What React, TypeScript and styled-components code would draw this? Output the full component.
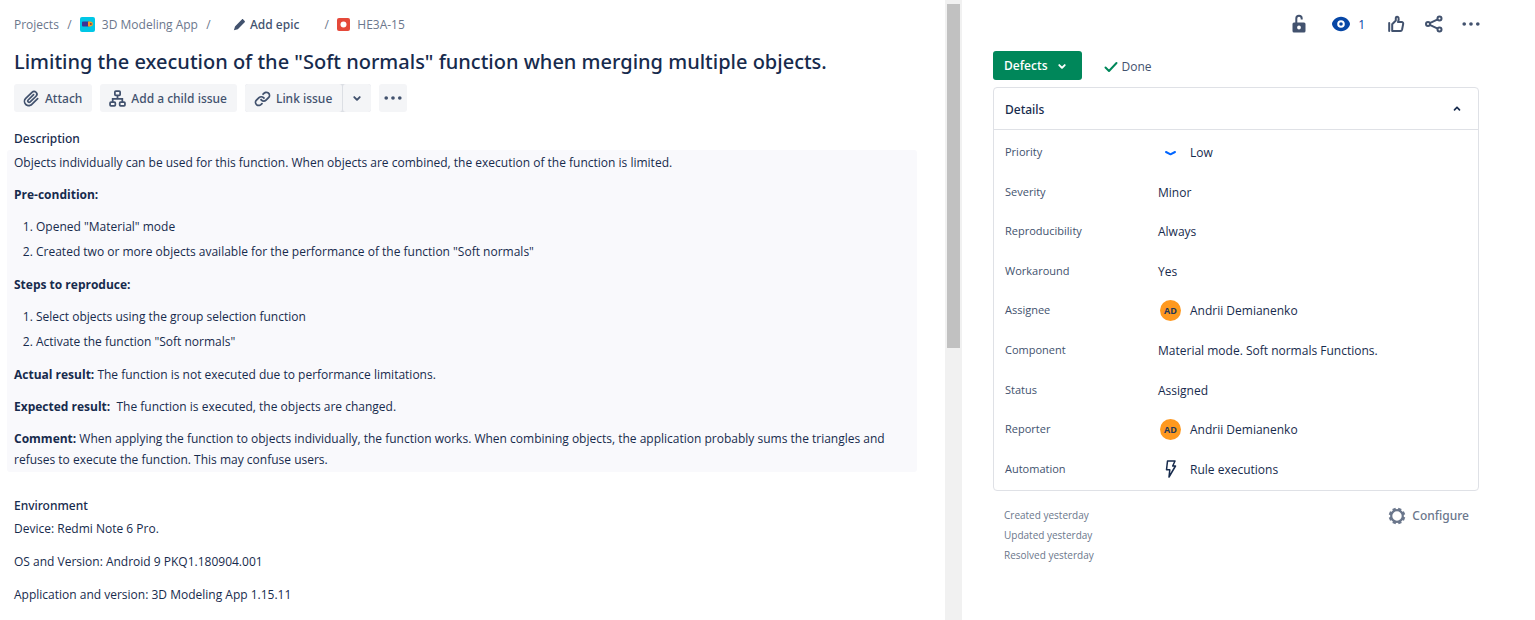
import React from 'react';
import styled, { createGlobalStyle, css } from 'styled-components';

const GlobalStyle = createGlobalStyle`
  *, *::before, *::after { box-sizing: border-box; }
  body {
    margin: 0;
    background: #fff;
    color: #172b4d;
    font: 400 12px/21px 'Open Sans', 'Noto Sans', sans-serif;
  }
  button { font: inherit; color: inherit; border: 0; background: none; padding: 0; cursor: pointer; }
  a { color: inherit; text-decoration: none; }
  h1, h2, p, ol, ul, dl, dd { margin: 0; padding: 0; }
  svg { display: block; flex: none; }
`;

const medium = css`
  font-family: 'Noto Sans', 'Open Sans', sans-serif;
  font-weight: 500;
`;

const Page = styled.div`
  display: grid;
  grid-template-columns: minmax(0, 945fr) 17px minmax(0, 573fr);
  min-height: 100vh;
`;

const Main = styled.main`
  padding: 14px 28px 16px 14px;
`;

const Breadcrumbs = styled.nav`
  display: flex;
  align-items: center;
  height: 21px;
  color: #6b778c;
`;

const Crumb = styled.a`
  display: flex;
  align-items: center;
  gap: 7px;
`;

const Slash = styled.span`
  width: 21px;
  text-align: center;
`;

const EpicButton = styled.button`
  display: flex;
  align-items: center;
  gap: 4px;
  margin: 0 17px 0 13px;
  color: #42526e;
  ${medium}
`;

const Title = styled.h1`
  margin-top: 13px;
  ${medium}
  font-size: 20px;
  line-height: 28px;
`;

const Toolbar = styled.div`
  display: flex;
  gap: 8px;
  margin-top: 8px;
`;

const ToolButton = styled.button<{ $square?: boolean }>`
  display: flex;
  align-items: center;
  justify-content: center;
  gap: 3px;
  height: 28px;
  padding: ${p => (p.$square ? '0' : '0 10px 0 7px')};
  width: ${p => (p.$square ? '28px' : 'auto')};
  border-radius: 3px;
  background: #f4f5f7;
  color: #42526e;
  ${medium}
`;

const SplitButton = styled.div`
  display: flex;
  gap: 1px;
  border-radius: 3px;
  background: #dcdfe4;
`;

const SectionTitle = styled.h2`
  ${medium}
  font-size: 12px;
  line-height: 21px;
`;

const Description = styled.section`
  margin-top: 16px;
`;

const RichText = styled.div`
  margin: 1px 0 0 -7px;
  padding: 2px 7px;
  border-radius: 3px;
  background: #f9f9fc;

  p + p, ol + p { margin-top: 11px; }
  ol { margin: 11px 0 12px; padding-left: 22px; }
  li + li { margin-top: 4px; }
  strong { font-weight: 700; }
`;

const Environment = styled.section`
  margin-top: 23px;

  p { margin-top: 2px; }
  p + p { margin-top: 12px; }
`;

const ScrollTrack = styled.div`
  padding: 4px 2px;
  background: #f1f1f1;
`;

const ScrollThumb = styled.div`
  height: 344px;
  background: #c1c1c1;
`;

const Side = styled.aside`
  padding: 12px 56px 16px 31px;
`;

const Actions = styled.div`
  display: flex;
  justify-content: flex-end;
  align-items: center;
  gap: 14px;
  height: 24px;
  margin-right: -3px;
  color: #42526e;
`;

const IconButton = styled.button<{ $active?: boolean }>`
  display: flex;
  align-items: center;
  gap: 5px;
  ${p => p.$active && css`
    color: #0747a6;
    padding: 0 5px 0 4px;
  `}
`;

const StatusRow = styled.div`
  display: flex;
  align-items: center;
  gap: 20px;
  margin-top: 15px;
`;

const StatusButton = styled.button`
  display: flex;
  align-items: center;
  gap: 3px;
  height: 29px;
  padding: 0 9px 0 11px;
  border-radius: 3px;
  background: #00875a;
  color: #fff;
  font-weight: 600;
`;

const Resolution = styled.span`
  display: flex;
  align-items: center;
  gap: 3px;
  padding: 2px 0 0 1px;
  color: #42526e;
`;

const Panel = styled.section`
  margin-top: 7px;
  border: 1px solid #dfe1e6;
  border-radius: 4px;
`;

const PanelHeader = styled.button`
  display: flex;
  align-items: center;
  justify-content: space-between;
  width: 100%;
  height: 42px;
  padding: 1px 11px 0;
  border-bottom: 1px solid #dfe1e6;
  ${medium}
`;

const Fields = styled.dl`
  display: grid;
  grid-auto-rows: 1fr;
  min-height: 360px;
  padding: 3px 11px 1px;
`;

const Field = styled.div`
  display: grid;
  grid-template-columns: 153px minmax(0, 1fr);
  align-items: center;
`;

const FieldLabel = styled.dt`
  padding-bottom: 2px;
  color: #42526e;
  font-size: 11px;
`;

const FieldValue = styled.dd`
  display: flex;
  align-items: center;
  gap: 8px;
`;

const Avatar = styled.span`
  display: flex;
  align-items: center;
  justify-content: center;
  width: 21px;
  height: 21px;
  margin: 0 1px 0 2px;
  border-radius: 50%;
  background: #ff991f;
  color: #253858;
  font-size: 9px;
  font-weight: 700;
`;

const Footer = styled.footer`
  display: flex;
  justify-content: space-between;
  align-items: flex-start;
  padding: 14px 10px 0 11px;
  color: #6b778c;
`;

const Dates = styled.ul`
  list-style: none;
  font-size: 10px;
  line-height: 20px;
`;

const ConfigureButton = styled.button`
  display: flex;
  align-items: center;
  gap: 5px;
  ${medium}
`;

const Svg = ({ size = 24, children }: { size?: number; children: React.ReactNode }) => (
  <svg width={size} height={size} viewBox="0 0 24 24" fill="currentColor" aria-hidden="true">{children}</svg>
);

const ChevronDown = () => (
  <Svg size={22}>
    <path d="M8.292 10.293a1.009 1.009 0 000 1.419l2.939 2.965c.218.215.5.322.779.322s.556-.107.769-.322l2.93-2.955a1.01 1.01 0 000-1.419.987.987 0 00-1.406 0l-2.298 2.317-2.307-2.327a.99.99 0 00-1.406 0z" />
  </Svg>
);

const ChevronUp = () => (
  <Svg size={20}>
    <path d="M8.292 13.707a1.009 1.009 0 010-1.419l2.939-2.965c.218-.215.5-.322.779-.322s.556.107.769.322l2.93 2.955a1.01 1.01 0 010 1.419.987.987 0 01-1.406 0l-2.298-2.317-2.307 2.327a.99.99 0 01-1.406 0z" />
  </Svg>
);

const MoreIcon = () => (
  <Svg size={22}>
    <circle cx="4.6" cy="12" r="2" />
    <circle cx="12" cy="12" r="2" />
    <circle cx="19.4" cy="12" r="2" />
  </Svg>
);

const AttachIcon = () => (
  <Svg size={21}>
    <path d="M11.643 17.965c-1.53 1.495-4.016 1.496-5.542.004a3.773 3.773 0 01.002-5.412l7.147-6.985a2.316 2.316 0 013.233-.003c.893.873.895 2.282.004 3.153l-6.703 6.55a.653.653 0 01-.914-.008.62.62 0 010-.902l6.229-6.087a.941.941 0 000-1.353.995.995 0 00-1.384 0l-6.23 6.087a2.502 2.502 0 00.001 3.607 2.643 2.643 0 003.683.009l6.703-6.55a4.074 4.074 0 00-.003-5.859 4.306 4.306 0 00-6.002.003l-7.148 6.985a5.655 5.655 0 00-.001 8.118c2.29 2.239 6.015 2.238 8.308-.005l6.712-6.56a.943.943 0 000-1.353.995.995 0 00-1.384 0l-6.711 6.561z" />
  </Svg>
);

const ChildIcon = () => (
  <Svg size={21}>
    <g fill="none" stroke="currentColor" strokeWidth="2">
      <rect x="9" y="3.5" width="6" height="5" rx="1" />
      <rect x="3.5" y="16" width="6" height="4.5" rx="1" />
      <rect x="14.5" y="16" width="6" height="4.5" rx="1" />
      <path d="M12 8.5v4M6.5 16v-3.5h11V16" />
    </g>
  </Svg>
);

const LinkIcon = () => (
  <Svg size={21}>
    <path d="M12.856 5.457l-.937.92a1.002 1.002 0 000 1.437 1.047 1.047 0 001.463 0l.984-.966c.967-.95 2.542-1.135 3.602-.288a2.54 2.54 0 01.203 3.81l-2.903 2.852a2.646 2.646 0 01-3.696 0l-1.11-1.09L9 13.57l1.108 1.089c1.822 1.788 4.802 1.788 6.622 0l2.905-2.852a4.558 4.558 0 00-.357-6.82c-1.893-1.517-4.695-1.226-6.422.47" />
    <path d="M11.144 19.543l.937-.92a1.002 1.002 0 000-1.437 1.047 1.047 0 00-1.462 0l-.985.966c-.967.95-2.542 1.135-3.602.288a2.54 2.54 0 01-.203-3.81l2.903-2.852a2.646 2.646 0 013.696 0l1.11 1.09L15 11.43l-1.108-1.089c-1.822-1.788-4.802-1.788-6.622 0l-2.905 2.852a4.558 4.558 0 00.357 6.82c1.893 1.517 4.695 1.226 6.422-.47" />
  </Svg>
);

const PencilIcon = () => (
  <svg width="14" height="14" viewBox="0 0 14 14" fill="currentColor" aria-hidden="true">
    <path d="M9.3 1.9l.6-.5c.4-.4.9-.4 1.3 0l1.5 1.5c.4.4.4.9 0 1.3l-.5.600-6.400 6.400-3.900 1 1.100-3.800z" />
  </svg>
);

const ProjectIcon = () => (
  <svg width="15" height="15" viewBox="0 0 15 15" aria-hidden="true">
    <rect width="15" height="15" rx="2" fill="#00c7e6" />
    <path d="M3 4.5h6v5H3a1 1 0 01-1-1v-3a1 1 0 011-1z" fill="#403294" />
    <path d="M8 4.5h2.500a2.500 2.500 0 010 5H8z" fill="#ff991f" />
    <circle cx="10.8" cy="7" r="1" fill="#6b4a5a" />
  </svg>
);

const BugIcon = () => (
  <svg width="13" height="13" viewBox="0 0 13 13" aria-hidden="true">
    <rect width="13" height="13" rx="2" fill="#e5493a" />
    <circle cx="6.5" cy="6.5" r="3" fill="#fff" />
  </svg>
);

const UnlockIcon = () => (
  <Svg>
    <path fillRule="evenodd" d="M7 10.500h10a1.500 1.500 0 011.500 1.500v7a1.500 1.500 0 01-1.500 1.500H7A1.500 1.500 0 015.500 19v-7A1.500 1.500 0 017 10.500zM12 13.600a1.900 1.900 0 100 3.800 1.900 1.900 0 000-3.800z" />
    <path d="M9.3 11V6.400a2.700 2.700 0 015.400 0v1" fill="none" stroke="currentColor" strokeWidth="2" />
  </Svg>
);

const WatchIcon = () => (
  <Svg>
    <path fillRule="evenodd" d="M12 4.8c5 0 9 4.400 9 7.200s-4 7.200-9 7.200S3 14.800 3 12s4-7.200 9-7.200zm0 3.400a3.800 3.800 0 100 7.600 3.800 3.800 0 000-7.600z" />
    <circle cx="12" cy="12" r="1.8" />
  </Svg>
);

const LikeIcon = () => (
  <Svg>
    <path d="M5.2 11V19" fill="none" stroke="currentColor" strokeWidth="2" strokeLinecap="round" />
    <path d="M8.2 12.200l3.600-3.700V6a1.400 1.400 0 012.700-.3c.4 1.200.1 2.800-.5 4.300h3.700c1 0 1.700.9 1.500 1.900l-1.100 5.600c-.2.900-.8 1.500-1.700 1.500H8.200z" fill="none" stroke="currentColor" strokeWidth="2" strokeLinejoin="round" />
  </Svg>
);

const ShareIcon = () => (
  <Svg>
    <g fill="none" stroke="currentColor" strokeWidth="2">
      <circle cx="6" cy="12" r="2" />
      <circle cx="17.5" cy="6.5" r="2" />
      <circle cx="17.5" cy="17.5" r="2" />
      <path d="M7.8 11.100l7.900-3.700M7.800 12.900l7.900 3.700" />
    </g>
  </Svg>
);

const CheckIcon = () => (
  <svg width="16" height="16" viewBox="0 0 16 16" fill="none" stroke="#00875a" strokeWidth="2" strokeLinecap="round" strokeLinejoin="round" aria-hidden="true">
    <path d="M2.5 8.500l3.500 3.500 7.500-8" />
  </svg>
);

const LowIcon = () => (
  <svg width="24" height="16" viewBox="0 0 24 16" fill="none" stroke="#0065ff" strokeWidth="2" strokeLinecap="round" strokeLinejoin="round" aria-hidden="true">
    <path d="M8 7l4.500 2.300L17 7" />
  </svg>
);

const BoltIcon = () => (
  <svg width="24" height="20" viewBox="0 0 24 20" fill="none" stroke="currentColor" strokeWidth="1.5" strokeLinejoin="round" aria-hidden="true">
    <path d="M9.5 2h7.500l-2.300 5H17.500l-6.500 11 .800-7.200H8.500z" />
  </svg>
);

const GearIcon = () => (
  <svg width="20" height="20" viewBox="0 0 20 20" fill="none" stroke="currentColor" aria-hidden="true">
    <circle cx="10" cy="10" r="5.8" strokeWidth="2.2" />
    <g strokeWidth="3.4">
      {[0, 45, 90, 135, 180, 225, 270, 315].map(a => (
        <path key={a} d="M10 1.8v2.600" transform={`rotate(${a + 22} 10 10)`} />
      ))}
    </g>
  </svg>
);

const person = <><Avatar aria-hidden="true">AD</Avatar>Andrii Demianenko</>;

const fields: [string, React.ReactNode][] = [
  ['Priority', <><LowIcon />Low</>],
  ['Severity', 'Minor'],
  ['Reproducibility', 'Always'],
  ['Workaround', 'Yes'],
  ['Assignee', person],
  ['Component', 'Material mode. Soft normals Functions.'],
  ['Status', 'Assigned'],
  ['Reporter', person],
  ['Automation', <><BoltIcon /><a href="#rules">Rule executions</a></>],
];

export default function App() {
  return (
    <>
      <GlobalStyle />
      <Page>
        <Main>
          <Breadcrumbs aria-label="Breadcrumbs">
            <Crumb href="#projects">Projects</Crumb>
            <Slash>/</Slash>
            <Crumb href="#project"><ProjectIcon />3D Modeling App</Crumb>
            <Slash>/</Slash>
            <EpicButton type="button"><PencilIcon />Add epic</EpicButton>
            <Slash>/</Slash>
            <Crumb href="#issue"><BugIcon />HE3A-15</Crumb>
          </Breadcrumbs>

          <Title>Limiting the execution of the "Soft normals" function when merging multiple objects.</Title>

          <Toolbar>
            <ToolButton type="button"><AttachIcon />Attach</ToolButton>
            <ToolButton type="button"><ChildIcon />Add a child issue</ToolButton>
            <SplitButton>
              <ToolButton type="button"><LinkIcon />Link issue</ToolButton>
              <ToolButton type="button" $square aria-label="More link options"><ChevronDown /></ToolButton>
            </SplitButton>
            <ToolButton type="button" $square aria-label="More actions"><MoreIcon /></ToolButton>
          </Toolbar>

          <Description>
            <SectionTitle>Description</SectionTitle>
            <RichText>
              <p>Objects individually can be used for this function. When objects are combined, the execution of the function is limited.</p>
              <p><strong>Pre-condition:</strong></p>
              <ol>
                <li>Opened "Material" mode</li>
                <li>Created two or more objects available for the performance of the function "Soft normals"</li>
              </ol>
              <p><strong>Steps to reproduce:</strong></p>
              <ol>
                <li>Select objects using the group selection function</li>
                <li>Activate the function "Soft normals"</li>
              </ol>
              <p><strong>Actual result:</strong> The function is not executed due to performance limitations.</p>
              <p><strong>Expected result:</strong>&nbsp; The function is executed, the objects are changed.</p>
              <p><strong>Comment:</strong> When applying the function to objects individually, the function works. When combining objects, the application probably sums the triangles and refuses to execute the function. This may confuse users.</p>
            </RichText>
          </Description>

          <Environment>
            <SectionTitle>Environment</SectionTitle>
            <p>Device: Redmi Note 6 Pro.</p>
            <p>OS and Version: Android 9 PKQ1.180904.001</p>
            <p>Application and version: 3D Modeling App 1.15.11</p>
          </Environment>
        </Main>

        <ScrollTrack aria-hidden="true"><ScrollThumb /></ScrollTrack>

        <Side>
          <Actions>
            <IconButton type="button" aria-label="Restrictions"><UnlockIcon /></IconButton>
            <IconButton type="button" $active aria-label="Watchers: 1"><WatchIcon />1</IconButton>
            <IconButton type="button" aria-label="Vote"><LikeIcon /></IconButton>
            <IconButton type="button" aria-label="Share"><ShareIcon /></IconButton>
            <IconButton type="button" aria-label="More"><MoreIcon /></IconButton>
          </Actions>

          <StatusRow>
            <StatusButton type="button">Defects<ChevronDown /></StatusButton>
            <Resolution><CheckIcon />Done</Resolution>
          </StatusRow>

          <Panel>
            <PanelHeader type="button" aria-expanded="true">Details<ChevronUp /></PanelHeader>
            <Fields>
              {fields.map(([label, value]) => (
                <Field key={label}>
                  <FieldLabel>{label}</FieldLabel>
                  <FieldValue>{value}</FieldValue>
                </Field>
              ))}
            </Fields>
          </Panel>

          <Footer>
            <Dates>
              <li>Created yesterday</li>
              <li>Updated yesterday</li>
              <li>Resolved yesterday</li>
            </Dates>
            <ConfigureButton type="button"><GearIcon />Configure</ConfigureButton>
          </Footer>
        </Side>
      </Page>
    </>
  );
}
